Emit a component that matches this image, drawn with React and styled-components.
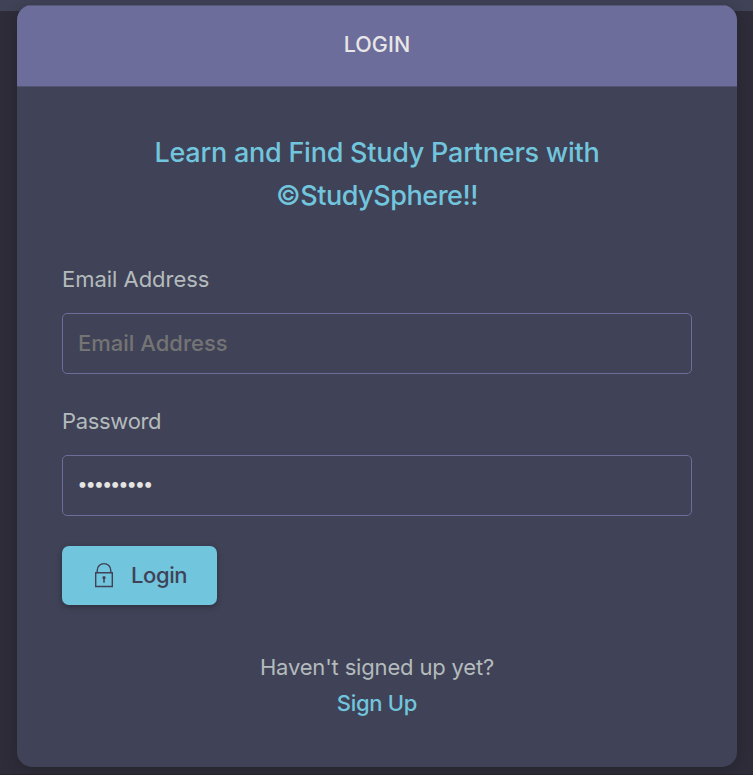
import React from "react";
import styled, { createGlobalStyle } from "styled-components";

const GlobalStyle = createGlobalStyle`
  *, *::before, *::after { box-sizing: border-box; }
  html, body { margin: 0; height: 775px; overflow: hidden; }
  body {
    background: linear-gradient(#404257 0 11px, #2d2c38 11px 774px, #29222f 774px);
    font-family: "Inter", "Open Sans", sans-serif;
    color: #b7bfbe;
  }
`;

const Page = styled.main`
  height: 775px;
  padding: 5px 16px 8px 17px;
`;

const Card = styled.section`
  height: 762px;
  border-radius: 15px;
  overflow: hidden;
  background: #404257;
  box-shadow: 0 2px 14px rgba(0, 0, 0, 0.2);
`;

const CardHeader = styled.header`
  height: 82px;
  display: flex;
  justify-content: center;
  padding-top: 23px;
  background: #6c6d9a;
  border-top: 1px solid #575979;
  border-bottom: 1px solid #525472;
`;

const Text = styled.span`
  display: block;
  white-space: nowrap;
  font-size: ${(p) => p.$size || 22}px;
  line-height: ${(p) => p.$line || 30}px;
  font-weight: ${(p) => p.$weight || 400};
  letter-spacing: ${(p) => p.$track || 0}px;
  color: ${(p) => p.$color || "#b3bbbc"};
`;

const Form = styled.form`
  padding: 44px 45px 0;
`;

const Title = styled.h1`
  margin: 0 0 47px;
  display: flex;
  flex-direction: column;
  align-items: center;
`;

const Field = styled.label`
  display: block;
  height: 110px;
  & + & { margin-top: 32px; }
`;

const Input = styled.input`
  display: block;
  width: 100%;
  height: 61px;
  margin-top: 19px;
  padding: 0 15px ${(p) => p.$lift || 0}px ${(p) => p.$inset || 15}px;
  border: 1px solid #6c6d9a;
  border-radius: 5px;
  outline: 0;
  background: transparent;
  color: #e6e4e3;
  font: 500 ${(p) => p.$size || 22}px "Inter", sans-serif;
  letter-spacing: ${(p) => p.$track || 0}px;
  &::placeholder { color: #747474; opacity: 1; }
`;

const Button = styled.button`
  width: 155px;
  height: 59px;
  margin: 30px 0 0;
  padding: 0 0 2px 32px;
  display: flex;
  align-items: center;
  gap: 15px;
  border: 0;
  border-radius: 7px;
  background: #71c5dd;
  box-shadow: 0 2px 6px rgba(0, 0, 0, 0.3);
  font-family: inherit;
`;

const Footer = styled.footer`
  margin-top: 44px;
  display: flex;
  flex-direction: column;
  align-items: center;
`;

const Link = styled.a`
  text-decoration: none;
`;

function LockIcon() {
  return (
    <svg width="22" height="26" viewBox="0 0 22 26" fill="none" stroke="#404257" strokeWidth="1.4">
      <path d="M1.7 10.7h16.6v13.8H1.7z" />
      <path d="M3.2 10.7V8.4a6.8 6.8 0 0 1 13.6 0v2.3" />
      <circle cx="10" cy="15.7" r="1.6" fill="#404257" stroke="none" />
      <path d="M10 15.7v5" strokeWidth="1.5" />
    </svg>
  );
}

export default function App() {
  return (
    <>
      <GlobalStyle />
      <Page>
        <Card>
          <CardHeader>
            <Text $size={21.5} $weight={500} $color="#e8e6e6" $track={0.1}>LOGIN</Text>
          </CardHeader>
          <Form onSubmit={(e) => e.preventDefault()}>
            <Title>
              <Text $size={27} $line={43} $weight={500} $track={-0.24} $color="#71c5dd">Learn and Find Study Partners with</Text>
              <Text $size={27} $line={43} $weight={500} $track={-0.45} $color="#71c5dd">©StudySphere!!</Text>
            </Title>
            <Field>
              <Text $track={-0.03}>Email Address</Text>
              <Input type="email" placeholder="Email Address" $lift={2} />
            </Field>
            <Field>
              <Text $track={-0.32}>Password</Text>
              <Input type="password" defaultValue="studyhard" $size={18.5} $track={-1.65} $lift={5} $inset={14.5} />
            </Field>
            <Button type="submit">
              <LockIcon />
              <Text $weight={500} $track={-0.4} $color="#404257">Login</Text>
            </Button>
            <Footer>
              <Text $line={36} $track={-0.17}>Haven't signed up yet?</Text>
              <Link href="#signup">
                <Text $line={36} $weight={500} $track={-0.3} $color="#71c5dd">Sign Up</Text>
              </Link>
            </Footer>
          </Form>
        </Card>
      </Page>
    </>
  );
}
